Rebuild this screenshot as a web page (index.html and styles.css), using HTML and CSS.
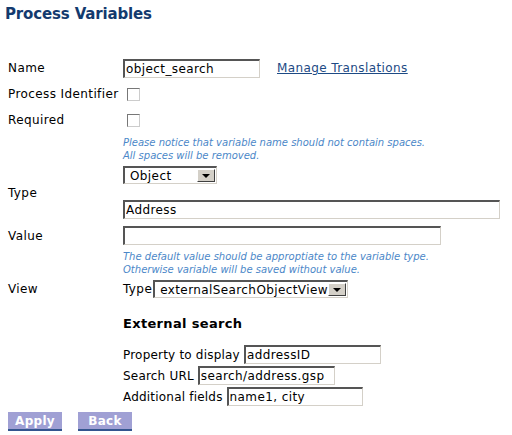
FILE: index.html
```html
<!DOCTYPE html>
<html>
<head>
<meta charset="utf-8">
<link rel="stylesheet" href="styles.css">
</head>
<body>
<h1 class="title">Process Variables</h1>
<form class="form">
  <div class="lbl">Name</div>
  <div class="val row26"><input class="txt w137" type="text" value="object_search"><a class="link" href="#">Manage Translations</a></div>

  <div class="lbl">Process Identifier</div>
  <div class="val row26"><input class="chk" type="checkbox"></div>

  <div class="lbl">Required</div>
  <div class="val row26"><input class="chk" type="checkbox"></div>

  <div class="lbl"></div>
  <div class="val hint hint1">Please notice that variable name should not contain spaces.<br>All spaces will be removed.</div>

  <div class="lbl">Type</div>
  <div class="val stack">
    <span class="sel w94"><select><option>Object</option></select><span class="arr"><i></i></span></span>
    <input class="txt w377" type="text" value="Address">
  </div>

  <div class="lbl lbl-value">Value</div>
  <div class="val value-row"><input class="txt w318" type="text" value=""></div>

  <div class="lbl"></div>
  <div class="val hint hint2">The default value should be approptiate to the variable type.<br>Otherwise variable will be saved without value.</div>

  <div class="lbl">View</div>
  <div class="val view-row"><span class="view-type">Type</span><span class="sel w195"><select><option>externalSearchObjectView</option></select><span class="arr"><i></i></span></span></div>

  <div class="lbl"></div>
  <div class="val ext">
    <h2 class="ext-title">External search</h2>
    <div class="ext-rows">
      <div class="ext-row"><span class="ext-lbl">Property to display</span><input class="txt w137" type="text" value="addressID"></div>
      <div class="ext-row"><span class="ext-lbl">Search URL</span><input class="txt w137" type="text" value="search/address.gsp"></div>
      <div class="ext-row"><span class="ext-lbl">Additional fields</span><input class="txt w136" type="text" value="name1, city"></div>
    </div>
  </div>
</form>
<div class="buttons">
  <button class="btn" type="button">Apply</button>
  <button class="btn" type="button">Back</button>
</div>
</body>
</html>
```
FILE: styles.css
```css
html, body {
  margin: 0;
  padding: 0;
  background: #fff;
}
body {
  padding: 0 0 0 8px;
  font-family: "DejaVu Sans", Verdana, sans-serif;
  font-size: 12px;
  letter-spacing: 0.4px;
  color: #000;
}
.title {
  margin: 0 0 31px -3px;
  padding-top: 4px;
  font-size: 15px;
  font-weight: bold;
  letter-spacing: -0.15px;
  color: #133a6e;
  line-height: 20px;
}
.form {
  display: grid;
  grid-template-columns: 115px 1fr;
  align-items: center;
}
.lbl {
  white-space: nowrap;
}
.lbl-value {
  align-self: end;
  padding-bottom: 6px;
}
.val {
  display: flex;
  align-items: center;
}
.row26 {
  height: 26px;
}
.txt {
  box-sizing: border-box;
  height: 19px;
  margin: 0;
  padding: 0 2px 0 1px;
  font-family: "DejaVu Sans", Verdana, sans-serif;
  font-size: 12px;
  letter-spacing: 0.4px;
  color: #000;
  background: #fff;
  border-style: solid;
  border-width: 2px 1px 1px 2px;
  border-color: #555 #d4d0c8 #d4d0c8 #555;
  outline: none;
}
.w137 { width: 137px; }
.w136 { width: 136px; }
.w377 { width: 377px; }
.w318 { width: 318px; }
.link {
  margin-left: 17px;
  color: #1d4a84;
  text-decoration: underline;
}
.chk {
  appearance: none;
  -webkit-appearance: none;
  box-sizing: border-box;
  width: 13px;
  height: 13px;
  margin: 0 0 0 4px;
  background: #fff;
  border-style: solid;
  border-width: 1px;
  border-color: #777 #ccc #ccc #777;
}
.hint {
  display: block;
  font-size: 10px;
  font-style: italic;
  letter-spacing: 0;
  line-height: 13px;
  color: #4b87c8;
}
.hint1 {
  padding: 3px 0 4px;
}
.hint2 {
  padding: 1px 0 4px;
}
.stack {
  flex-direction: column;
  align-items: flex-start;
  gap: 16px;
}
.value-row {
  padding: 7px 0 4px;
}
.sel {
  box-sizing: border-box;
  display: inline-flex;
  align-items: stretch;
  height: 18px;
  background: #fff;
  border-style: solid;
  border-width: 2px 1px 1px 2px;
  border-color: #555 #d4d0c8 #d4d0c8 #555;
}
.sel select {
  appearance: none;
  -webkit-appearance: none;
  flex: 1;
  min-width: 0;
  margin: 0;
  padding: 0 0 0 5px;
  border: 0;
  background: #fff;
  font-family: "DejaVu Sans", Verdana, sans-serif;
  font-size: 12px;
  letter-spacing: 0.4px;
  color: #000;
  outline: none;
}
.arr {
  box-sizing: border-box;
  width: 18px;
  margin: 1px 1px 1px 0;
  display: flex;
  align-items: center;
  justify-content: center;
  background: #d4d0c8;
  border-style: solid;
  border-width: 1px;
  border-color: #fff #404040 #404040 #fff;
}
.arr i {
  display: block;
  width: 0;
  height: 0;
  border-left: 4px solid transparent;
  border-right: 4px solid transparent;
  border-top: 4px solid #000;
}
.w94 { width: 94px; }
.w195 { width: 195px; }
.view-row {
  height: 18px;
}
.view-type {
  margin-right: 1px;
}
.ext {
  display: block;
}
.ext-title {
  margin: 17px 0 12px;
  font-size: 13px;
  font-weight: bold;
  letter-spacing: 0.33px;
  line-height: 18px;
}
.ext-rows {
  display: flex;
  flex-direction: column;
  gap: 2px;
}
.ext-row {
  display: flex;
  align-items: center;
  height: 19px;
}
.ext-lbl {
  letter-spacing: 0.2px;
  margin-right: 4px;
  white-space: nowrap;
}
.buttons {
  display: flex;
  gap: 16px;
  margin-top: 6px;
}
.btn {
  box-sizing: border-box;
  width: 54px;
  height: 19px;
  padding: 0;
  font-family: "DejaVu Sans", Verdana, sans-serif;
  font-size: 12px;
  font-weight: bold;
  letter-spacing: 0.3px;
  color: #fff;
  background: #a0a0d4;
  border: 0;
  border-bottom: 2px solid #34558f;
}
```
